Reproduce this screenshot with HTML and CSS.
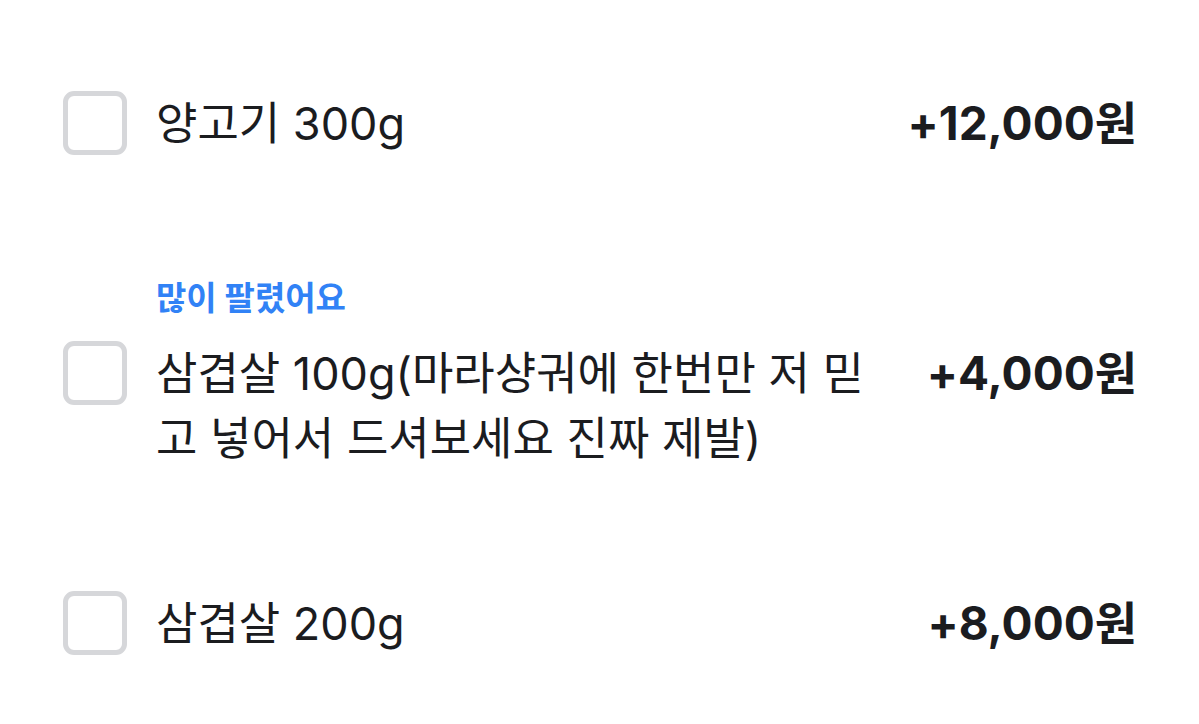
FILE: index.html
```html
<!DOCTYPE html>
<html lang="ko">
<head>
    <meta charset="UTF-8">
    <meta name="viewport" content="width=device-width, initial-scale=1.0">
    <title>옵션 선택</title>
    <link rel="stylesheet" href="styles.css">
</head>
<body>
    <ul class="option-list">
        <li class="option">
            <label class="option-row">
                <span class="checkbox"></span>
                <span class="option-name">양고기 300g</span>
                <span class="option-price">+12,000원</span>
            </label>
        </li>
        <li class="option">
            <div class="option-badge">많이 팔렸어요</div>
            <label class="option-row">
                <span class="checkbox"></span>
                <span class="option-name">삼겹살 100g(마라샹궈에 한번만 저 믿고 넣어서 드셔보세요 진짜 제발)</span>
                <span class="option-price">+4,000원</span>
            </label>
        </li>
        <li class="option">
            <label class="option-row">
                <span class="checkbox"></span>
                <span class="option-name">삼겹살 200g</span>
                <span class="option-price">+8,000원</span>
            </label>
        </li>
    </ul>
</body>
</html>
```

FILE: styles.css
```css
body {
    margin: 0;
    background-color: #ffffff;
    color: #1b1c1f;
    font-family: Inter, 'Noto Sans CJK KR', sans-serif;
}

.option-list {
    list-style: none;
    margin: 0;
    padding: 31px 62px 0 63px;
}

.option {
    padding: 60px 0;
}

.option-badge {
    color: #3182f6;
    font-size: 33px;
    font-weight: 700;
    line-height: 44px;
    margin-bottom: 21px;
    padding-left: 93px;
}

.option-row {
    display: flex;
    align-items: flex-start;
    cursor: pointer;
}

.checkbox {
    flex: none;
    width: 64px;
    height: 64px;
    box-sizing: border-box;
    border: 5px solid #d6d7da;
    border-radius: 11px;
    margin-right: 29px;
}

.option-name {
    flex: 1;
    font-size: 45px;
    line-height: 65px;
}

.option-price {
    flex: none;
    margin-left: 40px;
    font-size: 46px;
    font-weight: 700;
    line-height: 65px;
}
```
